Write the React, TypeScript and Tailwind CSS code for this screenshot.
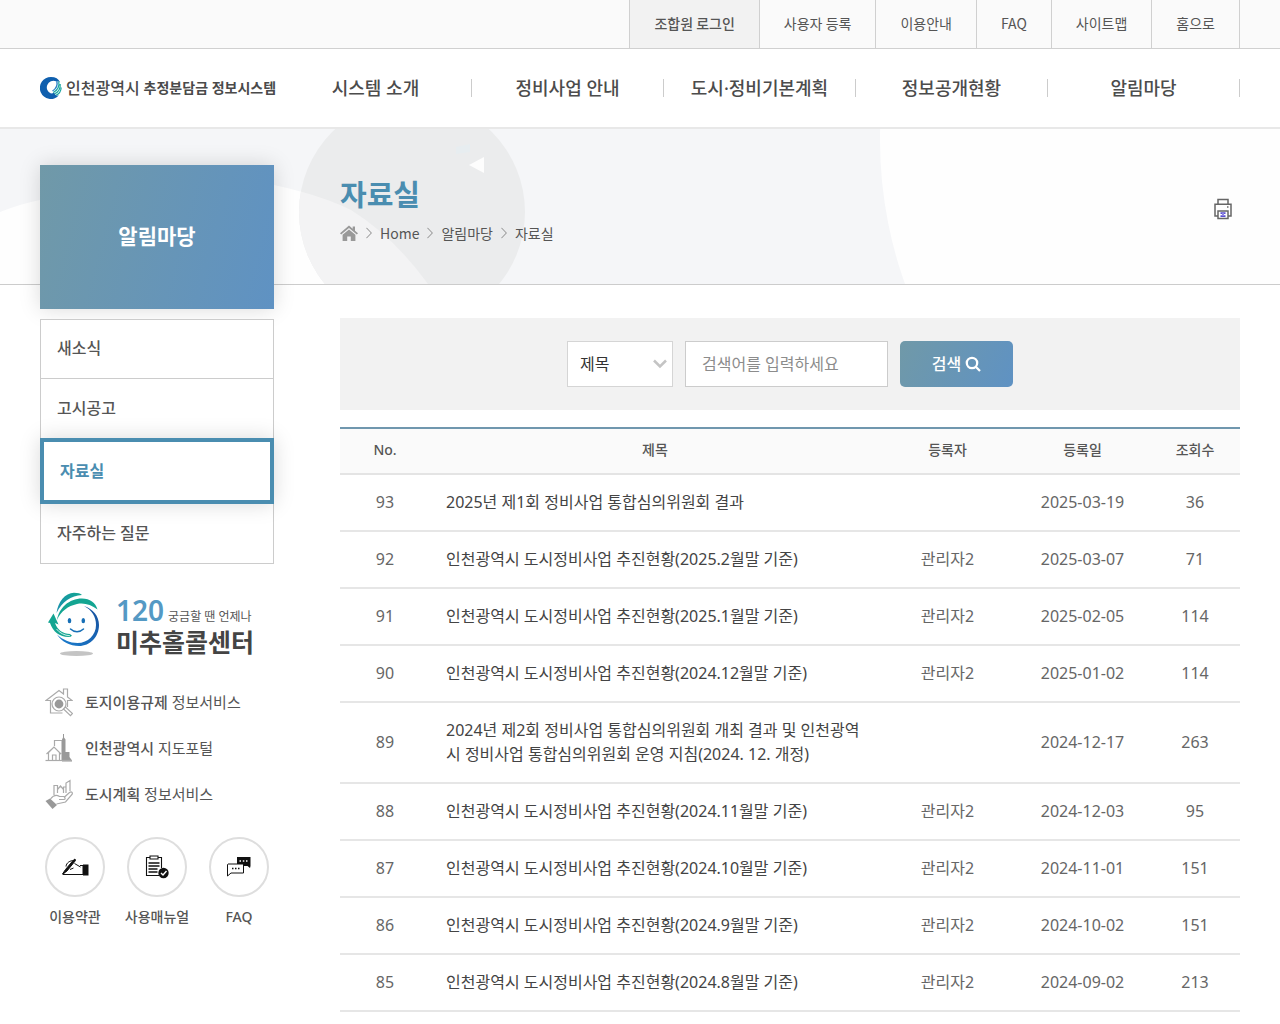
import { useState } from 'react'
import type { ReactNode } from 'react'
import clsx from 'clsx'

interface Post {
  no: number
  title: string
  author?: string
  date: string
  views: number
}

const utilityLinks = ['조합원 로그인', '사용자 등록', '이용안내', 'FAQ', '사이트맵', '홈으로']

const mainMenu = ['시스템 소개', '정비사업 안내', '도시·정비기본계획', '정보공개현황', '알림마당']

const sideMenu = ['새소식', '고시공고', '자료실', '자주하는 질문']

const posts: Post[] = [
  { no: 93, title: '2025년 제1회 정비사업 통합심의위원회 결과', date: '2025-03-19', views: 36 },
  { no: 92, title: '인천광역시 도시정비사업 추진현황(2025.2월말 기준)', author: '관리자2', date: '2025-03-07', views: 71 },
  { no: 91, title: '인천광역시 도시정비사업 추진현황(2025.1월말 기준)', author: '관리자2', date: '2025-02-05', views: 114 },
  { no: 90, title: '인천광역시 도시정비사업 추진현황(2024.12월말 기준)', author: '관리자2', date: '2025-01-02', views: 114 },
  {
    no: 89,
    title: '2024년 제2회 정비사업 통합심의위원회 개최 결과 및 인천광역시 정비사업 통합심의위원회 운영 지침(2024. 12. 개정)',
    date: '2024-12-17',
    views: 263,
  },
  { no: 88, title: '인천광역시 도시정비사업 추진현황(2024.11월말 기준)', author: '관리자2', date: '2024-12-03', views: 95 },
  { no: 87, title: '인천광역시 도시정비사업 추진현황(2024.10월말 기준)', author: '관리자2', date: '2024-11-01', views: 151 },
  { no: 86, title: '인천광역시 도시정비사업 추진현황(2024.9월말 기준)', author: '관리자2', date: '2024-10-02', views: 151 },
  { no: 85, title: '인천광역시 도시정비사업 추진현황(2024.8월말 기준)', author: '관리자2', date: '2024-09-02', views: 213 },
]

function LogoMark() {
  return (
    <svg viewBox="2 0 22 24" className="h-6 w-[22px] shrink-0" aria-hidden="true">
      <path
        fill="#0f5fae"
        fillRule="evenodd"
        d="M13 1c4.500 0 7.600 1.800 9 5.200-1.200-.8-2.600-1.200-4-1A6.200 6.200 0 1 0 13 17.600c1.300-.2 2.400-.6 3.200-1.200.6 2.200 2.200 3.400 4.600 3.200A11 11 0 1 1 13 1Z"
      />
      <path fill="none" stroke="#17a5a0" strokeWidth="1.200" d="M20.800 5.500c.8 5-1.200 8.800-5.600 11M22.200 8c.4 4.800-1.800 8-5.600 9.800M23.200 11.500c-.2 4-2 6.400-5.200 7.800" />
      <path fill="none" stroke="#2f86c8" strokeWidth="1.400" d="M18.800 5c1 4-.4 7.600-4.300 10" />
    </svg>
  )
}

// Pale overlapping discs behind the page title.
function BannerArt() {
  return (
    <svg
      viewBox="0 0 1280 155"
      preserveAspectRatio="xMidYMin slice"
      className="absolute inset-0 h-full w-full"
      aria-hidden="true"
    >
      <defs>
        <clipPath id="disc">
          <circle cx="412" cy="83" r="113" />
        </clipPath>
      </defs>
      <rect width="1280" height="155" fill="#f5f6f8" />
      <path d="M0 83Q20 75 40 71Q160 30 274 56Q320 66 351 81Q394 108 428 155H0Z" fill="#fefefe" />
      <circle cx="412" cy="83" r="113" fill="#ebeced" />
      <path clipPath="url(#disc)" d="M274 56Q320 66 351 81Q394 108 428 155H274Z" fill="#f3f3f4" />
      <path d="M469 36l15-8v16Z" fill="#fdfdfd" />
      <path d="M456 18l14-3v8l-14 2Z" fill="#e7edf0" />
      <circle cx="1307" cy="11" r="427" fill="#fefefe" />
    </svg>
  )
}

function HomeIcon() {
  return (
    <svg viewBox="0 0 18 16" className="h-4 w-[18px]" fill="#999" aria-hidden="true">
      <path d="M9 .5 0 8.300l1.200 1.300L9 3l7.800 6.600L18 8.300l-3-2.600V1.500h-2.300v2.200Z" />
      <path d="M9 4.400 2.600 9.800V16h4.600v-4.500h3.600V16h4.600V9.800Z" />
    </svg>
  )
}

function CrumbArrow() {
  return (
    <svg viewBox="0 0 6 12" className="h-3 w-1.5" fill="none" stroke="#888" aria-hidden="true">
      <path d="M.4.8 5.400 6 .4 11.200" />
    </svg>
  )
}

function PrinterIcon() {
  return (
    <svg viewBox="0 0 18 22" className="h-[22px] w-[18px]" fill="none" stroke="#666" strokeWidth="1.500" aria-hidden="true">
      <path d="M4 6V1.500h10V6M4 18H1V6.200h16V18h-3" />
      <path d="M4 13h10v7.500H4Z" />
      <path d="M13 9h1.500" />
      <path d="M6.500 15.200h5M6.500 18.200h5" stroke="#5b4fd0" strokeWidth="1.800" />
      <path d="M9 15v3" stroke="#8f86e0" strokeWidth="2" />
    </svg>
  )
}

function Mascot() {
  return (
    <svg viewBox="0 0 52 66" className="h-[66px] w-[52px] shrink-0" aria-hidden="true">
      <defs>
        <linearGradient id="ring" x1="0" y1="1" x2="1" y2="0">
          <stop offset="0" stopColor="#1c7fd0" />
          <stop offset="1" stopColor="#164f9c" />
        </linearGradient>
        <linearGradient id="leaf" x1="0" y1="1" x2="1" y2="0">
          <stop offset="0" stopColor="#1b8fb0" />
          <stop offset="1" stopColor="#13a592" />
        </linearGradient>
      </defs>
      <ellipse cx="28.500" cy="61.500" rx="16.500" ry="2.600" fill="#c4c4c4" />
      <path d="M36 14C45 17 51 24 51 33c0 12-9 21-20 21-9 0-17-4-22-11.500C15 48 22 51 29.500 51 40 51 48 43 48 33c0-8-4-15-12-19Z" fill="url(#ring)" />
      <path d="M8.500 21C10 10 17 1 26 .8c4 0 6.500.8 8 2.200C23 3.500 14 10 8.500 21Z" fill="url(#leaf)" />
      <path d="M9 28C11 16 21 6.500 34 6.500c8 0 13.500 4 15.500 11C43 12.500 36 10.500 29 12 20 14 13 19 9 28Z" fill="#13a592" />
      <path d="M5.500 21.500 0 30.500l2 .5C5 40 12 45.500 22 45l2-1.200-2-1.800C15 42 9.500 38 7 31l3.500 1.500Z" fill="#13a592" />
      <path d="M8.500 37c3 4 8 6.500 13.500 6.800" fill="none" stroke="#fff" strokeWidth=".8" />
      <ellipse cx="21.500" cy="28.700" rx="1.800" ry="2.600" fill="#176fb6" />
      <ellipse cx="35.300" cy="28.700" rx="1.800" ry="2.600" fill="#176fb6" />
      <path d="M22.500 37c3.500 3.500 9.500 3.500 13 0" fill="none" stroke="#176fb6" strokeWidth="1.500" strokeLinecap="round" />
    </svg>
  )
}

function HouseSearchIcon() {
  return (
    <svg viewBox="0 0 28 30" className="h-[30px] w-7" fill="none" stroke="#aaa" strokeWidth="1.200" aria-hidden="true">
      <path d="M5.500 13V26h12M22.500 13V20M5.500 13.500H1L14 3.500l4.500 3.500V2h4v8l4.500 3.500h-4.500" />
      <circle cx="14" cy="17" r="7" fill="#fff" />
      <circle cx="14" cy="17" r="4.400" fill="#999" stroke="none" />
      <path d="m18.500 22 2-2 7 6.500-2 2.200Z" fill="#fff" />
    </svg>
  )
}

function CityIcon() {
  return (
    <svg viewBox="0 0 28 30" className="h-[30px] w-7" fill="none" stroke="#aaa" strokeWidth="1.200" aria-hidden="true">
      <path d="M9.500 13V7.500H17V27M3.500 27V19.500L9 14l5.500 5.500V27M1.500 21 9 14l7 7M7.500 27v-5h3.500v5" />
      <path d="M17 27V6.500l1-2V1h1v3.500l1.500 2V19h4v5l2.500 3.500v1H17Z" fill="#999" stroke="none" />
      <path d="M.5 27.500H27" />
    </svg>
  )
}

function CityHandIcon() {
  return (
    <svg viewBox="0 0 28 30" className="h-[30px] w-7" fill="none" stroke="#aaa" strokeWidth="1.200" aria-hidden="true">
      <path d="M9 16V6.500h3.500V14M12.500 14v-3.500L15.500 7l3 3.500V14M18.500 14V8h2.500v6M21 14V4l4-2.500V12" />
      <path d="M5.500 20c3-4 6-4.500 9-2.500h4.500c1.500.5 1.500 3 0 3h-5M19 18.500l5.500-5c2-1.500 3.500 0 2.500 2L20.500 23 11.500 25" />
      <path d="m.5 22 4.500-2.500 7 6.500-4.500 4Z" fill="#999" stroke="none" />
    </svg>
  )
}

function WritingHandIcon() {
  return (
    <svg viewBox="0 0 28 18" className="h-[18px] w-7" fill="none" stroke="#111" aria-hidden="true">
      <path d="M5 8.500c.5-4 4-6 8-6M13.500 5.500l6 3.500M5 13l-3 3.500h17M9 11.500l3.500-1.500" />
      <path d="M12.500 2 4.500 11.500 1.500 16 6 13 14.500 2.500 14 1Z" fill="#111" />
      <path d="M19 7.500h3v9h-3" />
      <path d="M22 6.500h5.500v11H22Z" fill="#111" stroke="none" />
    </svg>
  )
}

function ClipboardIcon() {
  return (
    <svg viewBox="0 0 24 24" className="h-6 w-6" fill="none" stroke="#111" strokeWidth="1.100" aria-hidden="true">
      <path d="M5 2.500H1.500v18H14M13 2.500h3.500V13M5 1h8v3H5Z" />
      <path d="M3.500 8h11M3.500 11h11M3.500 14h9M3.500 17h9" strokeWidth="1.500" />
      <circle cx="18.500" cy="18" r="5.200" fill="#111" stroke="none" />
      <path d="m16 18 2 2 3.500-4" stroke="#fff" strokeWidth="1.400" />
    </svg>
  )
}

function ChatIcon() {
  return (
    <svg viewBox="0 0 26 22" className="h-[22px] w-[26px]" aria-hidden="true">
      <path d="M11 1h13.500v9l-.5 2-2.500-2H11Z" fill="#111" />
      <path d="M2 8h15.500v9H5l-3.500 3V8.500Z" fill="#fff" stroke="#111" />
      <path d="M6 12.500h1.500M9 12.500h1.500M12 12.500h1.500" stroke="#111" strokeWidth="1.500" />
      <path d="M13.500 5H15M16.800 5h1.500M20 5h1.500" stroke="#fff" strokeWidth="1.300" />
    </svg>
  )
}

function ServiceLink({ icon, strong, text }: { icon: ReactNode; strong: string; text: string }) {
  return (
    <li>
      <a href="#" className="flex h-[46px] items-center gap-3 text-[15px] text-[#555]">
        {icon}
        <span>
          <strong className="font-medium">{strong}</strong> {text}
        </span>
      </a>
    </li>
  )
}

function RoundLink({ icon, label }: { icon: ReactNode; label: string }) {
  return (
    <li className="w-[82px]">
      <a href="#" className="flex flex-col items-center gap-2.5 text-sm font-medium whitespace-nowrap text-[#555]">
        <span className="flex h-[60px] w-[60px] items-center justify-center rounded-full border-2 border-[#dedede]">
          {icon}
        </span>
        {label}
      </a>
    </li>
  )
}

function Header() {
  return (
    <header>
      <div className="border-b border-[#d0d0d0] bg-[#fafafa] font-['Noto_Sans_CJK_KR',sans-serif]">
        <ul className="mx-auto flex max-w-[1280px] justify-end px-10">
          {utilityLinks.map((label, i) => (
            <li key={label} className={clsx('border-r border-[#d0d0d0]', i === 0 && 'border-l bg-[#f2f2f2]')}>
              <a
                href="#"
                className={clsx('flex h-12 items-center px-6 pb-0.5 text-sm text-[#555]', i === 0 && 'font-medium')}
              >
                {label}
              </a>
            </li>
          ))}
        </ul>
      </div>

      <div className="border-b-2 border-[#e8e8e8] bg-white">
        <div className="mx-auto flex h-[78px] max-w-[1280px] items-center px-10">
          <a href="#" className="flex w-60 shrink-0 items-center gap-1 whitespace-nowrap text-[#4a4a4a]">
            <LogoMark />
            <span className="text-base font-medium">인천광역시</span>
            <span className="text-sm font-bold">추정분담금 정보시스템</span>
          </a>
          <nav className="flex-1">
            <ul className="flex">
              {mainMenu.map((label) => (
                <li key={label} className="flex flex-1 items-center">
                  <a href="#" className="flex-1 text-center text-lg font-medium whitespace-nowrap text-[#4c4c4c]">
                    {label}
                  </a>
                  <span className="h-[18px] w-px bg-[#ccc]" />
                </li>
              ))}
            </ul>
          </nav>
        </div>
      </div>
    </header>
  )
}

function Sidebar() {
  return (
    <aside className="relative -mt-[120px] w-[234px] shrink-0">
      <h2 className="flex h-36 items-center justify-center bg-[linear-gradient(105deg,#7099a8,#5f92c3)] pb-0.5 text-[21px] font-bold text-white shadow-[0_0_20px_rgba(0,0,0,0.15)]">
        알림마당
      </h2>

      <ul className="mt-2.5 border border-[#ccc] bg-white">
        {sideMenu.map((label, i) => (
          <li key={label} className="flex flex-col">
            {label === '자료실' ? (
              <a
                href="#"
                aria-current="page"
                className="-mx-px flex h-[66px] items-center border-4 border-[#4a8db0] bg-white px-4 font-bold text-[#4a8db0] shadow-[0_0_20px_rgba(0,0,0,0.15)]"
              >
                {label}
              </a>
            ) : (
              <a
                href="#"
                className={clsx(
                  'flex h-[59px] items-center px-4 pb-0.5 font-medium text-[#555]',
                  i === 0 && 'border-b border-[#ccc]',
                )}
              >
                {label}
              </a>
            )}
          </li>
        ))}
      </ul>

      <a href="#" className="mt-7 flex items-center gap-4 pl-2">
        <Mascot />
        <span className="flex flex-col pt-0.5 whitespace-nowrap">
          <span className="flex items-baseline gap-1">
            <b className="text-[28px] leading-8 font-semibold text-[#5499c4]">120</b>
            <span className="text-xs text-[#555]">궁금할 땐 언제나</span>
          </span>
          <strong className="text-[25px] leading-8 font-bold text-[#444]">미추홀콜센터</strong>
        </span>
      </a>

      <ul className="mt-[21px] pl-[5px]">
        <ServiceLink icon={<HouseSearchIcon />} strong="토지이용규제" text="정보서비스" />
        <ServiceLink icon={<CityIcon />} strong="인천광역시" text="지도포털" />
        <ServiceLink icon={<CityHandIcon />} strong="도시계획" text="정보서비스" />
      </ul>

      <ul className="-mx-1.5 mt-5 flex">
        <RoundLink icon={<WritingHandIcon />} label="이용약관" />
        <RoundLink icon={<ClipboardIcon />} label="사용매뉴얼" />
        <RoundLink icon={<ChatIcon />} label="FAQ" />
      </ul>
    </aside>
  )
}

function SearchForm() {
  const [keyword, setKeyword] = useState('')

  return (
    <form
      className="flex h-[92px] items-center justify-center gap-3 bg-[#f2f2f2]"
      onSubmit={(e) => e.preventDefault()}
    >
      <div className="relative">
        <label htmlFor="field" className="sr-only">
          검색 구분
        </label>
        <select
          id="field"
          className="block h-[46px] w-[106px] appearance-none border border-[#d5d5d5] bg-white pl-3 leading-normal text-[#333]"
        >
          <option>제목</option>
          <option>내용</option>
        </select>
        <svg
          viewBox="0 0 14 10"
          className="pointer-events-none absolute top-[18px] right-1.5 h-2.5 w-3.5"
          fill="none"
          stroke="#c4c4c4"
          strokeWidth="2.500"
          aria-hidden="true"
        >
          <path d="m1 1.500 6 6 6-6" />
        </svg>
      </div>
      <label htmlFor="keyword" className="sr-only">
        검색어
      </label>
      <input
        id="keyword"
        type="text"
        value={keyword}
        onChange={(e) => setKeyword(e.target.value)}
        placeholder="검색어를 입력하세요"
        className="h-[46px] w-[203px] border border-[#ccc] bg-white px-4 leading-normal text-[#333] placeholder:text-[#8c8c8c]"
      />
      <button
        type="submit"
        className="flex h-[46px] w-[113px] items-center justify-center gap-1 rounded-[5px] bg-[linear-gradient(115deg,#7099a8,#5f92c3)] font-medium text-white"
      >
        검색
        <svg viewBox="0 0 16 16" className="h-4 w-4" fill="none" stroke="#fff" strokeWidth="2.300" aria-hidden="true">
          <circle cx="7" cy="7" r="5.200" />
          <path d="m10.500 10.500 4.500 4.500" />
        </svg>
      </button>
    </form>
  )
}

function PostTable() {
  return (
    <table className="mt-[17px] w-full table-fixed border-separate border-spacing-0 text-center text-[#666]">
      <colgroup>
        <col className="w-[10%]" />
        <col className="w-[50%]" />
        <col className="w-[15%]" />
        <col className="w-[15%]" />
        <col className="w-[10%]" />
      </colgroup>
      <thead>
        <tr>
          {['No.', '제목', '등록자', '등록일', '조회수'].map((label) => (
            <th
              key={label}
              scope="col"
              className="h-12 border-t-2 border-b-2 border-t-[#7097ae] border-b-[#e4e4e4] bg-[#fafafa] pb-0.5 text-sm font-medium text-[#555]"
            >
              {label}
            </th>
          ))}
        </tr>
      </thead>
      <tbody className="[&_td]:border-b-2 [&_td]:border-[#e6e6e6] [&_td]:pt-[15px] [&_td]:pb-4">
        {posts.map((post) => (
          <tr key={post.no}>
            <td>{post.no}</td>
            <td className="px-4 text-left">
              <a href="#" className="text-[#444]">
                {post.title}
              </a>
            </td>
            <td>{post.author}</td>
            <td>{post.date}</td>
            <td>{post.views}</td>
          </tr>
        ))}
      </tbody>
    </table>
  )
}

export default function App() {
  return (
    <div className="min-h-screen bg-white font-['Noto_Sans','Noto_Sans_CJK_KR',sans-serif] text-base leading-6">
      <Header />

      <div className="relative border-b border-[#ccc]">
        <BannerArt />
        <div className="relative mx-auto flex h-[155px] max-w-[1280px] items-center justify-between pr-10 pl-[340px]">
          <div className="pt-1">
            <h1 className="text-[29px] leading-10 font-bold text-[#4a8db0]">자료실</h1>
            <nav
              aria-label="현재 위치"
              className="mt-2 flex items-center gap-2 font-['Noto_Sans_CJK_KR',sans-serif] text-sm text-[#555]"
            >
              <a href="#" aria-label="첫 화면">
                <HomeIcon />
              </a>
              <CrumbArrow />
              <a href="#">Home</a>
              <CrumbArrow />
              <a href="#">알림마당</a>
              <CrumbArrow />
              <span>자료실</span>
            </nav>
          </div>
          <button type="button" aria-label="인쇄" className="mt-1 mr-2">
            <PrinterIcon />
          </button>
        </div>
      </div>

      <div className="mx-auto flex max-w-[1280px] gap-[66px] px-10 pb-3">
        <Sidebar />
        <main className="min-w-0 flex-1 pt-[33px]">
          <SearchForm />
          <PostTable />
        </main>
      </div>
    </div>
  )
}
